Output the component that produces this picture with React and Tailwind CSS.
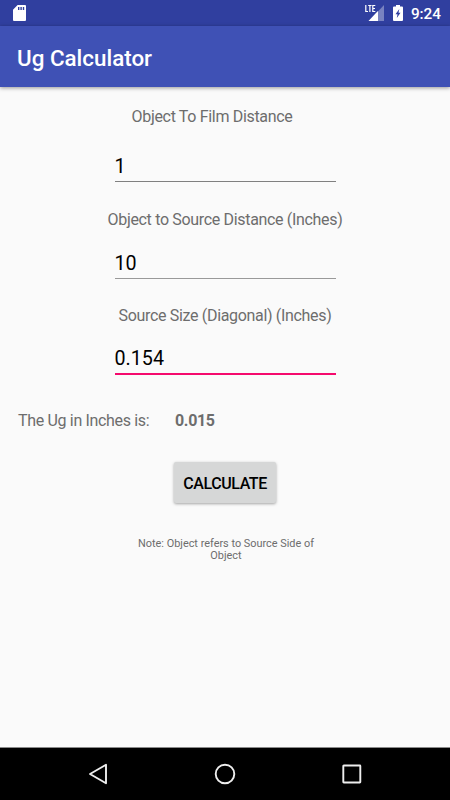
import { useState } from 'react';

function StatusBar() {
  return (
    <div className="flex h-[26px] items-center justify-between bg-[#303f9f] text-white">
      {/* sd card */}
      <svg className="ml-[13px] h-4 w-[13px]" viewBox="0 0 13 16">
        <path
          fill="currentColor"
          fillRule="evenodd"
          d="M4.6 0H12a1 1 0 0 1 1 1v14a1 1 0 0 1-1 1H1a1 1 0 0 1-1-1V4.8zM5 2v3h1.4V2zm2.4 0v3h1.4V2zm2.4 0v3h1.4V2z"
        />
      </svg>
      <div className="flex items-center pr-[9px]">
        {/* LTE signal */}
        <svg className="h-[17px] w-5" viewBox="0 0 20 17">
          <path fill="#fff" fillOpacity=".35" d="M19 1v16H4z" />
          <path fill="#303f9f" d="M0 0h11v9H0z" />
          <path
            fill="none"
            stroke="#fff"
            strokeWidth="1.200"
            d="M.8 1v6.500H3M3.2 1.500h3.400M4.9 1.500V8M10.300 1.500H7.800v6h2.500M7.800 4.500h2.200"
          />
          <path fill="#fff" d="M3.500 17l7.500-8 2-2v10z" />
        </svg>
        {/* charging battery */}
        <svg className="ml-2 h-4 w-[10px]" viewBox="0 0 10 16">
          <path
            fill="currentColor"
            fillRule="evenodd"
            d="M3 0h4v1.500h2a1 1 0 0 1 1 1V15a1 1 0 0 1-1 1H1a1 1 0 0 1-1-1V2.500a1 1 0 0 1 1-1h2zM6.300 4 2.500 9.200h2L3.800 13 7.500 7.800h-2z"
          />
        </svg>
        <span className="mt-[3px] ml-2 text-[15.300px] leading-none font-medium">9:24</span>
      </div>
    </div>
  );
}

function Field({ label, value, onChange, labelClass, className, lineClass }) {
  return (
    <label className={`flex flex-col items-center ${className}`}>
      <span
        className={`text-[16px] leading-[18px] tracking-[-0.330px] whitespace-nowrap text-[#6d6d6d] ${labelClass}`}
      >
        {label}
      </span>
      <input
        className={`w-[221px] bg-transparent text-[19.700px] leading-[24px] text-black outline-none ${lineClass}`}
        value={value}
        onChange={(e) => onChange(e.target.value)}
      />
    </label>
  );
}

function NavBar() {
  return (
    <nav className="flex h-[53px] items-center justify-between border-t border-[#8a8a8a] bg-black px-[86px] text-[#eee]">
      <svg className="h-6 w-6" viewBox="0 0 24 24" fill="none" stroke="currentColor" strokeWidth="1.900">
        <path strokeLinejoin="round" d="M20 2.800v18.400L4 12z" />
      </svg>
      <svg className="h-6 w-6" viewBox="0 0 24 24" fill="none" stroke="currentColor" strokeWidth="1.900">
        <circle cx="12" cy="12" r="9.300" />
      </svg>
      <svg className="h-6 w-6" viewBox="0 0 24 24" fill="none" stroke="currentColor" strokeWidth="1.900">
        <rect x="3.300" y="3.500" width="17" height="17" rx=".5" />
      </svg>
    </nav>
  );
}

export default function App() {
  const [film, setFilm] = useState('1');
  const [source, setSource] = useState('10');
  const [size, setSize] = useState('0.154');
  const [result, setResult] = useState('0.015');

  // Ug = source size * object to film / object to source
  const calculate = () => {
    const ug = (Number(size) * Number(film)) / Number(source);
    setResult(Number.isFinite(ug) ? ug.toFixed(3) : '');
  };

  return (
    <div className="flex h-[800px] w-[450px] flex-col overflow-hidden bg-[#fafafa] font-[Roboto,sans-serif]">
      <StatusBar />
      <header className="flex h-[61px] items-center bg-[#3f51b5] pt-1 pl-[17px] shadow-[0_1px_4px_rgba(0,0,0,0.4)]">
        <h1 className="text-[22.400px] font-medium text-white">Ug Calculator</h1>
      </header>

      <main className="flex flex-1 flex-col">
        <Field
          label="Object To Film Distance"
          value={film}
          onChange={setFilm}
          className="mt-[21px]"
          labelClass="mr-[26px] mb-[28px]"
          lineClass="h-[28px] border-b border-[#808080] pb-[2px]"
        />
        <Field
          label="Object to Source Distance (Inches)"
          value={source}
          onChange={setSource}
          className="mt-[29px]"
          labelClass="mb-[22px]"
          lineClass="h-[28px] border-b border-[#999] pb-[3px]"
        />
        <Field
          label="Source Size (Diagonal) (Inches)"
          value={size}
          onChange={setSize}
          className="mt-[28px]"
          labelClass="mb-[21px]"
          lineClass="h-[29px] border-b-2 border-[#f50a6d] pb-[2px]"
        />

        <div className="mt-[37px] flex pl-[18px] text-[16px] leading-[18px] tracking-[-0.330px] text-[#6d6d6d]">
          <span className="w-[157px]">The Ug in Inches is:</span>
          <span className="font-bold">{result}</span>
        </div>

        <button
          type="button"
          onClick={calculate}
          className="mt-[32px] ml-[174px] h-[41px] w-[102px] rounded-[2px] bg-[#d6d7d7] pt-[2px] text-[16px] font-medium tracking-[-0.400px] text-black shadow-[0_1px_3px_rgba(0,0,0,0.35)]"
        >
          CALCULATE
        </button>

        <p className="mt-[35px] ml-[126px] w-[200px] text-center text-[10.900px] leading-[12px] text-[#6d6d6d]">
          Note: Object refers to Source Side of
          <br />
          Object
        </p>
      </main>

      <NavBar />
    </div>
  );
}
